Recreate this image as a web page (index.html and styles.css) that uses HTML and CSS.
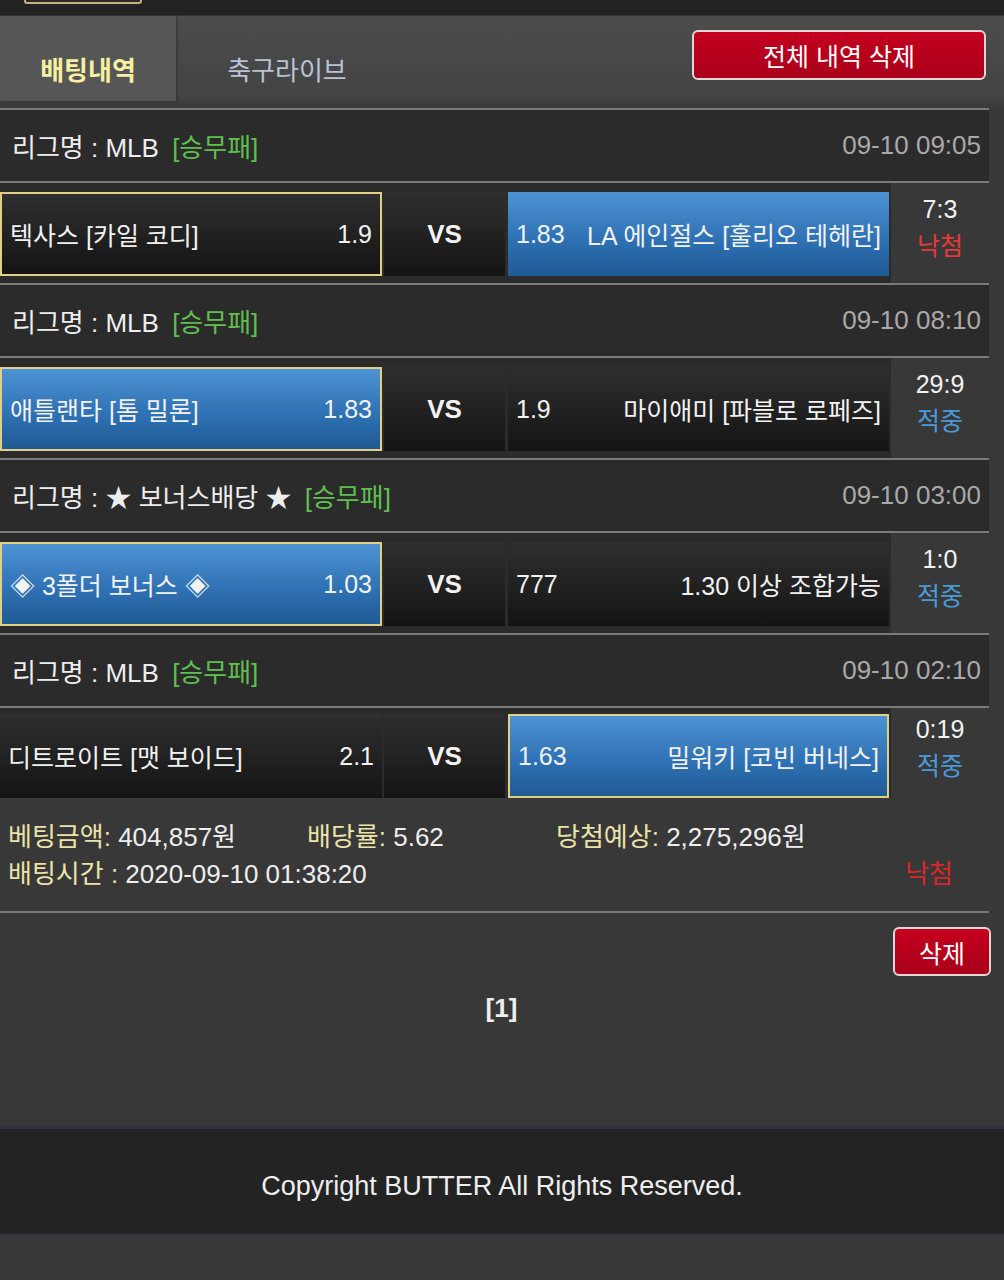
FILE: index.html
```html
<!DOCTYPE html>
<html lang="ko">
<head>
    <meta charset="UTF-8">
    <meta name="viewport" content="width=device-width, initial-scale=1.0">
    <title>배팅내역</title>
    <link rel="stylesheet" href="styles.css">
</head>
<body>
    <div class="topbar"><span class="top-btn"></span></div>

    <div class="tabs">
        <div class="tab active">배팅내역</div>
        <div class="tab">축구라이브</div>
        <button class="btn-red btn-clear">전체 내역 삭제</button>
    </div>

    <div class="wrap">
        <div class="bet">
            <div class="game">
                <div class="league">
                    <span>리그명 : MLB <em>[승무패]</em></span>
                    <span class="date">09-10 09:05</span>
                </div>
                <div class="match">
                    <div class="cell home picked"><span>텍사스 [카일 코디]</span><span>1.9</span></div>
                    <div class="cell vs">VS</div>
                    <div class="cell away win"><span>1.83</span><span>LA 에인절스 [훌리오 테헤란]</span></div>
                    <div class="result"><span>7:3</span><span class="lose">낙첨</span></div>
                </div>
            </div>

            <div class="game">
                <div class="league">
                    <span>리그명 : MLB <em>[승무패]</em></span>
                    <span class="date">09-10 08:10</span>
                </div>
                <div class="match">
                    <div class="cell home win picked"><span>애틀랜타 [톰 밀론]</span><span>1.83</span></div>
                    <div class="cell vs">VS</div>
                    <div class="cell away"><span>1.9</span><span>마이애미 [파블로 로페즈]</span></div>
                    <div class="result"><span>29:9</span><span class="hit">적중</span></div>
                </div>
            </div>

            <div class="game">
                <div class="league">
                    <span>리그명 : ★ 보너스배당 ★ <em>[승무패]</em></span>
                    <span class="date">09-10 03:00</span>
                </div>
                <div class="match">
                    <div class="cell home win picked"><span>◈ 3폴더 보너스 ◈</span><span>1.03</span></div>
                    <div class="cell vs">VS</div>
                    <div class="cell away"><span>777</span><span>1.30 이상 조합가능</span></div>
                    <div class="result"><span>1:0</span><span class="hit">적중</span></div>
                </div>
            </div>

            <div class="game">
                <div class="league">
                    <span>리그명 : MLB <em>[승무패]</em></span>
                    <span class="date">09-10 02:10</span>
                </div>
                <div class="match">
                    <div class="cell home"><span>디트로이트 [맷 보이드]</span><span>2.1</span></div>
                    <div class="cell vs">VS</div>
                    <div class="cell away win picked"><span>1.63</span><span>밀워키 [코빈 버네스]</span></div>
                    <div class="result"><span>0:19</span><span class="hit">적중</span></div>
                </div>
            </div>

            <div class="summary">
                <div class="sum-row">
                    <span class="col1"><b>베팅금액:</b> 404,857원</span>
                    <span class="col2"><b>배당률:</b> 5.62</span>
                    <span><b>당첨예상:</b> 2,275,296원</span>
                </div>
                <div class="sum-row">
                    <span><b>배팅시간 :</b> 2020-09-10 01:38:20</span>
                    <span class="sum-result">낙첨</span>
                </div>
            </div>
        </div>

        <div class="actions">
            <button class="btn-red btn-del">삭제</button>
        </div>
        <div class="paging">[1]</div>
    </div>

    <footer class="footer">Copyright BUTTER All Rights Reserved.</footer>
</body>
</html>
```

FILE: styles.css
```css
body {
    margin: 0;
    background-color: #383838;
    font-family: "Liberation Sans", "Noto Sans CJK KR", Arial, sans-serif;
    color: #eee;
}
.topbar {
    height: 15px;
    background-color: #222;
    position: relative;
}
.top-btn {
    position: absolute;
    left: 24px;
    top: -8px;
    width: 114px;
    height: 8px;
    border: 2px solid #c9b27a;
    border-radius: 3px;
    background-color: #2a2a2a;
}
.tabs {
    display: flex;
    align-items: flex-start;
    height: 93px;
    background: linear-gradient(#4c4c4c, #444 85%, #3a3a3a);
    box-sizing: border-box;
    border-top: 1px solid #333;
}
.tab {
    box-sizing: border-box;
    height: 85px;
    padding-top: 34px;
    font-size: 26px;
    text-align: center;
    color: #b9c3d6;
    width: 222px;
}
.tab.active {
    width: 176px;
    background-color: #565656;
    color: #f7efa2;
    font-weight: bold;
    box-shadow: 1px 1px 2px #333;
}
.btn-red {
    font-family: "Noto Sans CJK KR", "Liberation Sans", sans-serif;
    background: linear-gradient(#c4001f, #a9001a);
    color: #fff;
    border: 2px solid #e4d6d6;
    border-radius: 6px;
    cursor: pointer;
}
.btn-clear {
    margin-left: auto;
    margin-right: 18px;
    margin-top: 14px;
    width: 294px;
    height: 50px;
    font-size: 25px;
    line-height: 1;
}
.wrap {
    width: 989px;
}
.game .league {
    display: flex;
    justify-content: space-between;
    align-items: center;
    height: 71px;
    padding: 0 8px 0 12px;
    background-color: #2b2b2b;
    border-top: 2px solid #7a7a7a;
    font-size: 26px;
    color: #eee;
}
.league em {
    font-style: normal;
    color: #5fbf4f;
    margin-left: 6px;
}
.league .date {
    color: #a9a9a9;
}
.match {
    display: flex;
    gap: 2px;
    padding: 9px 0 7px;
    background-color: #2b2b2b;
    border-top: 2px solid #7a7a7a;
}
.game:nth-child(4) .match {
    padding: 6px 0 0;
}
.cell {
    box-sizing: border-box;
    height: 84px;
    display: flex;
    justify-content: space-between;
    align-items: center;
    gap: 14px;
    padding: 0 8px;
    font-size: 25px;
    color: #f2f2f2;
    background: linear-gradient(#2f2f2f, #141414);
}
.cell.home {
    width: 382px;
}
.cell.vs {
    width: 121px;
    justify-content: center;
    font-weight: bold;
    font-size: 26px;
}
.cell.away {
    width: 381px;
    margin-left: 1px;
}
.cell.win {
    background: linear-gradient(#4d93d4, #2f72b5 55%, #1f5a93);
}
.cell.picked {
    border: 2px solid #e2cf86;
}
.result {
    flex: 1;
    display: flex;
    flex-direction: column;
    align-items: center;
    justify-content: center;
    gap: 2px;
    padding-bottom: 10px;
    font-size: 25px;
    color: #f2f2f2;
    background-color: #383838;
    margin: -9px 0 -7px;
}
.game:nth-child(4) .result {
    margin: -6px 0 0;
}
.result .lose {
    color: #e53a3a;
}
.result .hit {
    color: #4a9ad8;
}
.summary {
    padding: 18px 8px 21px;
    border-bottom: 2px solid #7a7a7a;
    font-size: 26px;
}
.sum-row {
    display: flex;
    height: 37px;
    align-items: center;
}
.sum-row b {
    font-weight: normal;
    color: #ebe3a8;
}
.col1 {
    width: 299px;
}
.col2 {
    width: 249px;
}
.sum-result {
    margin-left: auto;
    margin-right: 28px;
    color: #d9262a;
}
.actions {
    display: flex;
    justify-content: flex-end;
    padding-top: 14px;
}
.btn-del {
    width: 98px;
    height: 49px;
    font-size: 25px;
    margin-right: -2px;
}
.paging {
    text-align: center;
    font-weight: bold;
    font-size: 26px;
    line-height: 30px;
    margin-top: 17px;
    padding-left: 14px;
    height: 133px;
}
.footer {
    height: 94px;
    line-height: 94px;
    padding-top: 10px;
    background-color: #232323;
    border-top: 3px solid #2d3440;
    border-bottom: 2px solid #2a2e34;
    text-align: center;
    font-size: 27px;
    color: #eee;
}
```
